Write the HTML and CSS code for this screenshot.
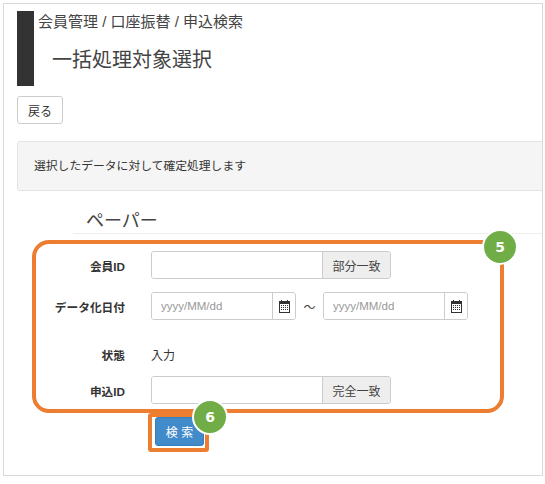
FILE: index.html
```html
<!DOCTYPE html>
<html>
<head>
    <meta charset="utf-8">
    <title>一括処理対象選択</title>
    <link rel="stylesheet" href="styles.css">
</head>
<body>
    <div id="frame">
        <div id="header">
            <div id="header-bar"></div>
            <div id="header-text">
                <p id="breadcrumb">会員管理 / 口座振替 / 申込検索</p>
                <h1>一括処理対象選択</h1>
            </div>
        </div>

        <button class="btn" id="back">戻る</button>

        <div id="well">選択したデータに対して確定処理します</div>

        <h2>ペーパー</h2>

        <div id="search-form">
            <div class="row">
                <label>会員ID</label>
                <div class="group wide">
                    <input type="text">
                    <span class="addon text">部分一致</span>
                </div>
            </div>
            <div class="row">
                <label>データ化日付</label>
                <div class="group date">
                    <input type="text" placeholder="yyyy/MM/dd">
                    <span class="addon">
                        <svg width="11" height="13" viewBox="0 0 11 13"><path fill="#333" d="M2 0h1v1h5V0h1v1h2v12H0V1h2zM1 4v8h9V4zM2 5h1v1H2zm2 0h1v1H4zm2 0h1v1H6zm2 0h1v1H8zM2 7h1v1H2zm2 0h1v1H4zm2 0h1v1H6zm2 0h1v1H8zM2 9h1v1H2zm2 0h1v1H4zm2 0h1v1H6zm2 0h1v1H8z"/></svg>
                    </span>
                </div>
                <span class="tilde">～</span>
                <div class="group date">
                    <input type="text" placeholder="yyyy/MM/dd">
                    <span class="addon">
                        <svg width="11" height="13" viewBox="0 0 11 13"><path fill="#333" d="M2 0h1v1h5V0h1v1h2v12H0V1h2zM1 4v8h9V4zM2 5h1v1H2zm2 0h1v1H4zm2 0h1v1H6zm2 0h1v1H8zM2 7h1v1H2zm2 0h1v1H4zm2 0h1v1H6zm2 0h1v1H8zM2 9h1v1H2zm2 0h1v1H4zm2 0h1v1H6zm2 0h1v1H8z"/></svg>
                    </span>
                </div>
            </div>
            <div class="row status">
                <label>状態</label>
                <span class="value">入力</span>
            </div>
            <div class="row">
                <label>申込ID</label>
                <div class="group wide">
                    <input type="text">
                    <span class="addon text">完全一致</span>
                </div>
            </div>
        </div>

        <button class="btn" id="search">検 索</button>

        <!-- orange annotations on top of the screenshot -->
        <div class="mark" id="mark-form"></div>
        <div class="mark" id="mark-search"></div>
        <div class="badge" id="badge-5">5</div>
        <div class="badge" id="badge-6">6</div>
    </div>
</body>
</html>
```

FILE: styles.css
```css
html, body {
	margin: 0;
	background: #fff;
}

body {
	font-family: "Liberation Sans", "Noto Sans CJK JP", sans-serif;
	color: #333;
	font-size: 12px;
}

#frame {
	position: relative;
	box-sizing: border-box;
	width: 540px;
	height: 473px;
	margin: 3px 0 0 3px;
	border: 1px solid #d9d9d9;
	padding: 7px 0 0 13px;
	overflow: hidden;
}

#header {
	display: flex;
	height: 75px;
}

#header-bar {
	width: 17px;
	background: #333;
}

#header-text {
	padding-left: 4px;
}

#breadcrumb {
	margin: 2px 0 0 0;
	font-size: 15px;
	line-height: 18px;
	color: #444;
}

h1 {
	margin: 16px 0 0 14px;
	font-size: 20px;
	font-weight: normal;
	line-height: 26px;
	color: #444;
}

.btn {
	display: block;
	font-family: inherit;
	font-size: 12px;
	border-radius: 3px;
	padding: 0;
}

#back {
	width: 46px;
	height: 28px;
	margin-top: 10px;
	background: #fff;
	border: 1px solid #ccc;
	color: #333;
}

#well {
	box-sizing: border-box;
	height: 50px;
	margin: 17px -10px 0 0;
	padding: 0 0 0 16px;
	line-height: 48px;
	background: #f5f5f5;
	border: 1px solid #e3e3e3;
	border-radius: 3px;
	font-size: 11.8px;
}

h2 {
	margin: 19px 0 0 56px;
	padding: 0 0 0 13px;
	height: 23px;
	font-size: 18px;
	font-weight: normal;
	line-height: 22px;
	color: #444;
	border-bottom: 1px solid #eee;
}

#search-form {
	margin-top: 17px;
}

.row {
	display: flex;
	align-items: center;
	height: 28px;
	margin-bottom: 13px;
}

.row label {
	width: 108px;
	text-align: right;
	font-weight: bold;
	font-size: 11.7px;
	margin-right: 26px;
	flex-shrink: 0;
}

.row.status {
	height: 18px;
	margin-top: 25px;
	margin-bottom: 13px;
}

.value {
	font-size: 12px;
}

.group {
	display: flex;
	box-sizing: border-box;
	height: 28px;
	border: 1px solid #ccc;
	border-radius: 3px;
	overflow: hidden;
}

.group.wide {
	width: 240px;
}

.group.date {
	width: 145px;
}

.group input {
	flex: 1;
	min-width: 0;
	box-sizing: border-box;
	border: 0;
	padding: 0 9px;
	font-family: inherit;
	font-size: 11.5px;
	outline: none;
	background: #fff;
}

.group input::placeholder {
	color: #999;
}

.addon {
	display: flex;
	align-items: center;
	justify-content: center;
	width: 22px;
	border-left: 1px solid #ccc;
	background: #fff;
}

.addon.text {
	width: 67px;
	background: #eee;
	font-size: 12px;
	color: #444;
}

.tilde {
	width: 27px;
	text-align: center;
	font-size: 12px;
	color: #444;
}

#search {
	width: 49px;
	height: 29px;
	margin: 0 0 0 138px;
	background: #428bca;
	border: 1px solid #357ebd;
	color: #fff;
}

.mark {
	position: absolute;
	box-sizing: border-box;
	border: 4px solid #ed7d31;
}

#mark-form {
	left: 28px;
	top: 236px;
	width: 472px;
	height: 173px;
	border-radius: 17px;
}

#mark-search {
	left: 144px;
	top: 409px;
	width: 61px;
	height: 39px;
	border-radius: 3px;
}

.badge {
	position: absolute;
	box-sizing: border-box;
	width: 36px;
	height: 36px;
	border: 2px solid #fff;
	border-radius: 50%;
	background: #70ad47;
	color: #fff;
	font-family: "DejaVu Sans", sans-serif;
	font-size: 14px;
	font-weight: bold;
	line-height: 32px;
	text-align: center;
}

#badge-5 {
	left: 478px;
	top: 225px;
}

#badge-6 {
	left: 188px;
	top: 395px;
}
```
